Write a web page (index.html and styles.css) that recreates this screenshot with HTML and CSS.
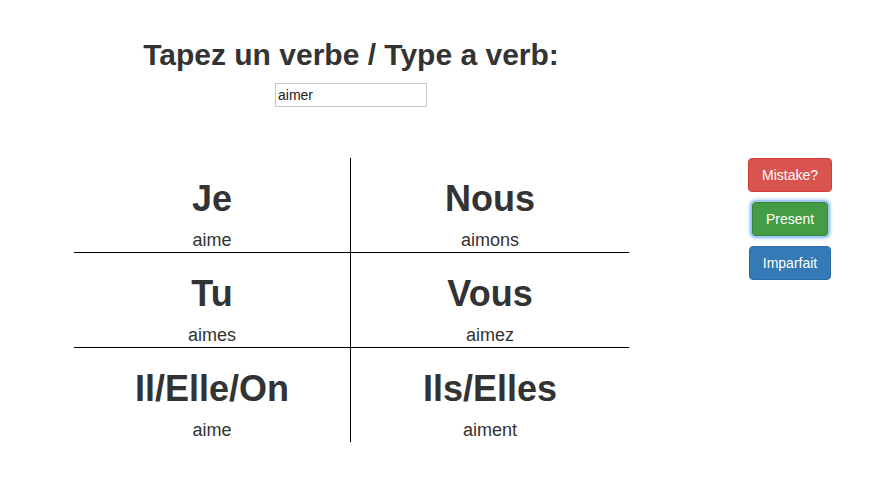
FILE: index.html
```html
<!DOCTYPE html>
<html>
<head>
<meta charset="utf-8">
<link rel="stylesheet" href="styles.css">
</head>
<body>
<div class="page">
  <div class="main">
    <h2 class="title">Tapez un verbe / Type a verb:</h2>
    <div class="input-wrap"><input class="verb-input" type="text" value="aimer"></div>
    <div class="grid">
      <div class="cell left top"><h1>Je</h1><p>aime</p></div>
      <div class="cell top"><h1>Nous</h1><p>aimons</p></div>
      <div class="cell left top"><h1>Tu</h1><p>aimes</p></div>
      <div class="cell top"><h1>Vous</h1><p>aimez</p></div>
      <div class="cell left"><h1>Il/Elle/On</h1><p>aime</p></div>
      <div class="cell"><h1>Ils/Elles</h1><p>aiment</p></div>
    </div>
  </div>
  <div class="side">
    <button class="btn btn-danger">Mistake?</button>
    <button class="btn btn-success focus">Present</button>
    <button class="btn btn-primary">Imparfait</button>
  </div>
</div>
</body>
</html>
```
FILE: styles.css
```css
html, body {
  margin: 0;
  padding: 0;
  background: #fff;
}
body {
  font-family: "Liberation Sans", Arial, Helvetica, sans-serif;
  color: #333;
  font-size: 14px;
}
.page {
  display: flex;
  width: 880px;
}
.main {
  width: 702px;
  text-align: center;
}
.title {
  font-size: 30px;
  font-weight: bold;
  line-height: 33px;
  margin: 38px 0 0 0;
}
.input-wrap {
  margin-top: 12px;
  height: 24px;
}
.verb-input {
  box-sizing: border-box;
  width: 152px;
  height: 24px;
  border: 1px solid #c8c8c8;
  padding: 1px 2px;
  font-family: "Liberation Sans", Arial, sans-serif;
  font-size: 14px;
  color: #222;
  outline: none;
  margin-left: 0;
}
.grid {
  margin: 51px 0 0 74px;
  width: 555px;
  display: grid;
  grid-template-columns: 277px 1fr;
}
.cell {
  height: 94px;
  box-sizing: content-box;
}
.cell.left {
  border-right: 1px solid #000;
}
.cell.top {
  border-bottom: 1px solid #000;
}
.cell h1 {
  font-size: 36px;
  font-weight: bold;
  line-height: 39.6px;
  margin: 21px 0 0 0;
}
.cell p {
  font-size: 18px;
  line-height: 26px;
  margin: 8px 0 0 0;
}
.side {
  width: 176px;
  display: flex;
  flex-direction: column;
  align-items: center;
  padding-top: 158px;
  gap: 10px;
}
.btn {
  font-family: "Liberation Sans", Arial, sans-serif;
  font-size: 14px;
  line-height: 20px;
  padding: 6px 13px;
  border: 1px solid transparent;
  border-radius: 4px;
  color: #fff;
  cursor: pointer;
}
.btn-danger {
  background: #d9534f;
  border-color: #d43f3a;
}
.btn-success {
  background: #449d44;
  border-color: #398439;
}
.btn-primary {
  background: #337ab7;
  border-color: #2e6da4;
}
.focus {
  box-shadow: 0 0 0 2px #9ecaf8, 0 0 3px 3px #b7d8fb;
}
```
